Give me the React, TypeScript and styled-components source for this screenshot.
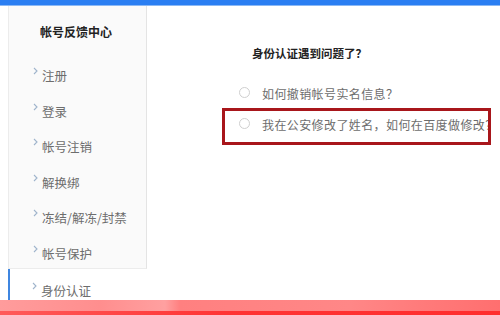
import styled, { createGlobalStyle } from "styled-components";

const GlobalStyle = createGlobalStyle`
  html, body {
    margin: 0;
    padding: 0;
    background: #fff;
  }
  body {
    font-family: "Noto Sans CJK SC", "Liberation Sans", sans-serif;
  }
`;

const Page = styled.div`
  width: 500px;
  height: 315px;
  display: flex;
  flex-direction: column;
  overflow: hidden;
  background: #fff;
`;

const TopBar = styled.div`
  height: 5px;
  flex-shrink: 0;
  background: #2a7ef2;
  border-bottom: 1px solid #8bb8f4;
`;

const Body = styled.div`
  flex: 1;
  display: flex;
  overflow: hidden;
`;

const Sidebar = styled.div`
  width: 139px;
  margin-left: 8px;
  flex-shrink: 0;
  display: flex;
  flex-direction: column;
`;

const Panel = styled.div`
  background: #fafafa;
  border-left: 1px solid #ececec;
  border-right: 1px solid #e4e4e4;
  border-bottom: 1px solid #ececec;
  padding-bottom: 1px;
`;

const PanelTitle = styled.div`
  padding: 18px 0 0 31px;
  line-height: 16px;
  height: 16px;
  font-size: 12px;
  font-weight: bold;
  color: #222;
  margin-bottom: 14px;
`;

const NavItem = styled.div<{ $active?: boolean }>`
  height: 35.5px;
  box-sizing: border-box;
  display: flex;
  align-items: flex-start;
  padding: 13px 0 0 ${(p) => (p.$active ? 22 : 24)}px;
  border-left: ${(p) => (p.$active ? "2px solid #3f86e0" : "none")};
  background: ${(p) => (p.$active ? "#fff" : "transparent")};
  font-size: 12.5px;
  line-height: 17px;
  color: #6d6d6d;
`;

const Chevron = styled.svg`
  width: 5px;
  height: 8px;
  margin: 0 4px 0 0;
  flex-shrink: 0;
`;

const Main = styled.div`
  flex: 1;
  padding: 39px 0 0 75px;
`;

const Heading = styled.div`
  margin-left: 30px;
  font-size: 11.5px;
  font-weight: bold;
  line-height: 16px;
  color: #222;
  margin-bottom: 17px;
`;

const Option = styled.div<{ $highlighted?: boolean }>`
  width: 269px;
  box-sizing: border-box;
  height: ${(p) => (p.$highlighted ? 37 : 31)}px;
  margin-top: ${(p) => (p.$highlighted ? -1.5 : 0)}px;
  padding: 0 0 ${(p) => (p.$highlighted ? 3 : 0)}px 14px;
  border: 3.5px solid ${(p) => (p.$highlighted ? "#a8161b" : "transparent")};
  display: flex;
  align-items: center;
  overflow: hidden;
  white-space: nowrap;
  font-size: 12px;
  letter-spacing: 0.4px;
  color: #6d6d6d;
`;

const Radio = styled.span`
  width: 11px;
  height: 11px;
  box-sizing: border-box;
  border: 1px solid #cfcfcf;
  border-radius: 50%;
  background: #fff;
  flex-shrink: 0;
  margin: 0 12px 3px 0;
`;

const Band = styled.div`
  height: 15px;
  flex-shrink: 0;
  display: flex;
  flex-direction: column;
`;

const BandTop = styled.div`
  flex: 1;
  background: linear-gradient(
    90deg,
    #ff9c9c 0%,
    #ff8e8e 20%,
    #ffa0a0 33%,
    #ff8080 36%,
    #ff8787 70%,
    #ff7a7a 85%,
    #ff6f6f 100%
  );
`;

const BandBottom = styled.div`
  height: 4px;
  background: linear-gradient(90deg, #ff5a5a 0%, #ff3434 45%, #ff2d2d 100%);
`;

const ChevronIcon = () => (
  <Chevron viewBox="0 0 5 8">
    <path d="M1 1 L4 4 L1 7" fill="none" stroke="#9fb4cc" strokeWidth="1.1" />
  </Chevron>
);

const items = ["注册", "登录", "帐号注销", "解换绑", "冻结/解冻/封禁", "帐号保护"];

export default function App() {
  return (
    <Page>
      <GlobalStyle />
      <TopBar />
      <Body>
        <Sidebar>
          <Panel>
            <PanelTitle>帐号反馈中心</PanelTitle>
            {items.map((label) => (
              <NavItem key={label}>
                <ChevronIcon />
                {label}
              </NavItem>
            ))}
          </Panel>
          <NavItem $active>
            <ChevronIcon />
            身份认证
          </NavItem>
        </Sidebar>
        <Main>
          <Heading>身份认证遇到问题了？</Heading>
          <Option>
            <Radio />
            如何撤销帐号实名信息？
          </Option>
          <Option $highlighted>
            <Radio />
            我在公安修改了姓名，如何在百度做修改？
          </Option>
        </Main>
      </Body>
      <Band>
        <BandTop />
        <BandBottom />
      </Band>
    </Page>
  );
}
